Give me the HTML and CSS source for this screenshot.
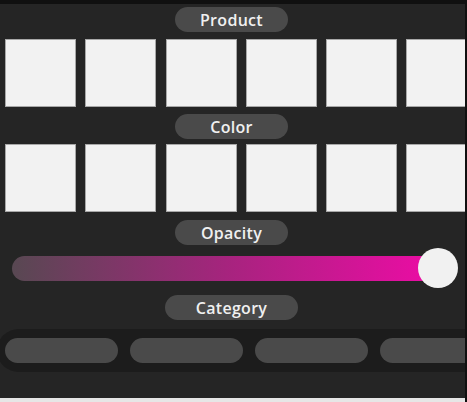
FILE: index.html
```html
<!DOCTYPE html>
<html>
<head>
<meta charset="utf-8">
<link rel="stylesheet" href="styles.css">
</head>
<body>
<div class="panel">
  <div class="label-row"><span class="pill">Product</span></div>
  <div class="tiles tiles-product">
    <div class="tile"></div><div class="tile"></div><div class="tile"></div>
    <div class="tile"></div><div class="tile"></div><div class="tile"></div>
  </div>
  <div class="label-row label-color"><span class="pill">Color</span></div>
  <div class="tiles tiles-color">
    <div class="tile"></div><div class="tile"></div><div class="tile"></div>
    <div class="tile"></div><div class="tile"></div><div class="tile"></div>
  </div>
  <div class="label-row label-opacity"><span class="pill">Opacity</span></div>
  <div class="slider">
    <div class="track"></div>
    <div class="thumb"></div>
  </div>
  <div class="label-row label-category"><span class="pill pill-wide">Category</span></div>
  <div class="chips">
    <div class="chip"></div><div class="chip"></div><div class="chip"></div><div class="chip"></div>
  </div>
</div>
<div class="footer"></div>
</body>
</html>
```
FILE: styles.css
```css
html, body {
  margin: 0;
  padding: 0;
}
body {
  width: 467px;
  height: 402px;
  background: #101010;
  overflow: hidden;
  font-family: "Open Sans", "Lato", sans-serif;
}
.panel {
  margin-top: 4px;
  width: 465px;
  height: 394px;
  background: #252525;
  overflow: hidden;
  padding-top: 3px;
  box-sizing: border-box;
  display: flex;
  flex-direction: column;
}
.label-row {
  display: flex;
  justify-content: center;
  padding-right: 2px;
}
.pill {
  width: 113px;
  height: 25px;
  border-radius: 12.5px;
  background: #4a4a4a;
  color: #f0f0f0;
  font-weight: 600;
  font-size: 16px;
  line-height: 1;
  letter-spacing: 0.3px;
  display: flex;
  align-items: center;
  justify-content: center;
}
.pill-wide {
  width: 133px;
}
.tiles {
  display: flex;
  gap: 9.3px;
  padding-left: 5px;
  margin-top: 7px;
}
.tiles-color {
  margin-top: 5px;
}
.tile {
  flex: 0 0 71px;
  height: 68px;
  box-sizing: border-box;
  background: #f2f2f2;
  border: 1px solid #a8a8a8;
}
.label-color {
  margin-top: 7px;
}
.label-opacity {
  margin-top: 8px;
}
.slider {
  position: relative;
  height: 40px;
  margin-top: 3px;
  display: flex;
  align-items: center;
  padding-left: 12px;
}
.track {
  width: 440px;
  height: 25px;
  border-radius: 12.5px;
  background: linear-gradient(to right, #584852, #a8237f 50%, #f20aa8);
}
.thumb {
  position: absolute;
  left: 418px;
  top: 0;
  width: 40px;
  height: 40px;
  border-radius: 50%;
  background: #f1f1f1;
}
.label-category {
  margin-top: 7px;
}
.chips {
  margin-top: 9px;
  margin-left: -3px;
  width: 520px;
  height: 43px;
  border-radius: 21.5px;
  background: #1c1c1c;
  display: flex;
  align-items: center;
  gap: 12px;
  padding-left: 8px;
  flex-shrink: 0;
}
.chip {
  flex: 0 0 113px;
  height: 25px;
  border-radius: 12.5px;
  background: #4a4a4a;
}
.footer {
  width: 465px;
  height: 4px;
  background: #e6e6e6;
}
```
